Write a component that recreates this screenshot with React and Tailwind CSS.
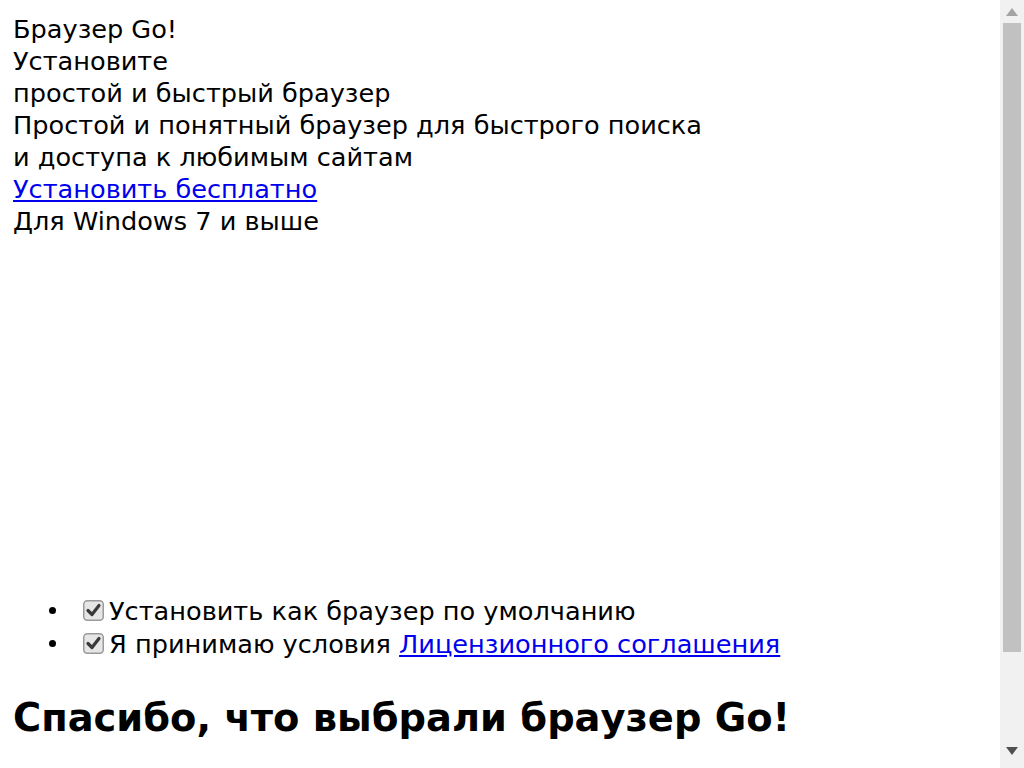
import React from 'react';

const font = { fontFamily: '"DejaVu Sans", sans-serif' };

function Check() {
  return (
    <svg width="21" height="21" viewBox="0 0 21 21" className="ml-[6px] mr-[5px] shrink-0">
      <rect x="0.75" y="0.75" width="19.5" height="19.5" rx="3.5" fill="#e6e6e6" stroke="#9a9a9a" strokeWidth="1.5" />
      <path d="M5 10.5 L9 14.5 L16 5.5" fill="none" stroke="#3a3a3a" strokeWidth="3.2" strokeLinecap="round" strokeLinejoin="round" />
    </svg>
  );
}

function Scrollbar() {
  return (
    <div className="w-[24px] h-full bg-[#f1f1f1] flex flex-col items-center shrink-0">
      <svg width="14" height="10" viewBox="0 0 14 10" className="mt-[7px]">
        <path d="M7 1 L13 9 L1 9 Z" fill="#a3a3a3" />
      </svg>
      <div className="w-[18px] h-[629px] mt-[6px] bg-[#c1c1c1]" />
      <div className="flex-1" />
      <svg width="14" height="10" viewBox="0 0 14 10" className="mb-[12px]">
        <path d="M1 1 L13 1 L7 9 Z" fill="#505050" />
      </svg>
    </div>
  );
}

function Item({ children }) {
  return (
    <li className="h-[33px] flex items-center">
      <span className="w-[7px] h-[7px] rounded-full bg-black mr-[21px] shrink-0" />
      <Check />
      <span className="whitespace-nowrap">{children}</span>
    </li>
  );
}

export default function App() {
  return (
    <div className="h-screen w-full flex overflow-hidden bg-white text-black" style={font}>
      <div className="flex-1 pl-[13px] pt-[13px] text-[25.6px] leading-[32px]">
        <div>Браузер Go!</div>
        <div>Установите</div>
        <div>простой и быстрый браузер</div>
        <div>Простой и понятный браузер для быстрого поиска</div>
        <div>и доступа к любимым сайтам</div>
        <div>
          <a href="#" className="text-[#0000ee] underline">Установить бесплатно</a>
        </div>
        <div>Для Windows 7 и выше</div>

        <div className="h-[357px]" />

        <ul className="pl-[36px]">
          <Item>Установить как браузер по умолчанию</Item>
          <Item>
            Я принимаю условия{' '}
            <a href="#" className="text-[#0000ee] underline">Лицензионного соглашения</a>
          </Item>
        </ul>

        <h2 className="mt-[35px] text-[38.4px] leading-[45px] font-bold">Спасибо, что выбрали браузер Go!</h2>
      </div>
      <Scrollbar />
    </div>
  );
}
